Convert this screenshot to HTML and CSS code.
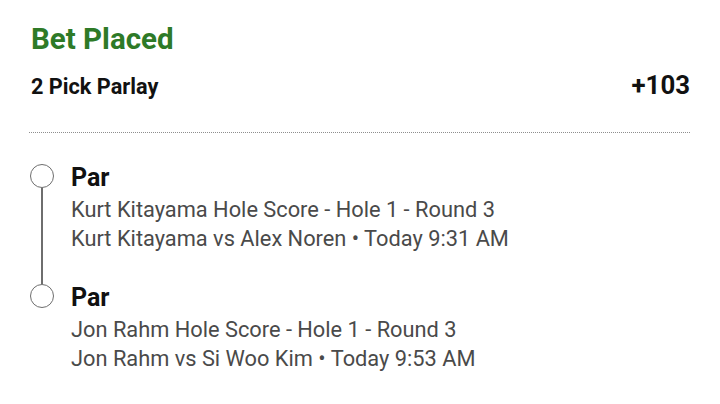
FILE: index.html
```html
<!DOCTYPE html>
<html>
<head>
<meta charset="utf-8">
<link rel="stylesheet" href="styles.css">
</head>
<body>
<div class="card">
  <div class="title">Bet Placed</div>
  <div class="head">
    <div class="parlay">2 Pick Parlay</div>
    <div class="odds">+103</div>
  </div>
  <div class="divider"></div>
  <div class="legs">
    <div class="leg">
      <div class="marker"><span class="circle"></span><span class="line"></span></div>
      <div class="info">
        <div class="pick">Par</div>
        <div class="sub">Kurt Kitayama Hole Score - Hole 1 - Round 3</div>
        <div class="sub">Kurt Kitayama vs Alex Noren • Today 9:31 AM</div>
      </div>
    </div>
    <div class="leg last">
      <div class="marker"><span class="circle"></span></div>
      <div class="info">
        <div class="pick">Par</div>
        <div class="sub">Jon Rahm Hole Score - Hole 1 - Round 3</div>
        <div class="sub">Jon Rahm vs Si Woo Kim • Today 9:53 AM</div>
      </div>
    </div>
  </div>
</div>
</body>
</html>
```
FILE: styles.css
```css
* { box-sizing: border-box; }
html, body { margin: 0; padding: 0; background: #fff; }
body { font-family: Roboto, "Noto Sans", sans-serif; color: #1a1a1a; }
.card { padding: 21px 30px 0 31px; }
.title { font-size: 29.5px; font-weight: 700; color: #2e7a27; line-height: 36px; }
.head { display: flex; justify-content: space-between; align-items: baseline; margin-top: 13.6px; }
.parlay { font-size: 21.7px; font-weight: 700; line-height: 28px; color: #111; }
.odds { font-size: 25.8px; font-weight: 700; line-height: 28px; color: #111; }
.divider { margin-top: 31px; border-top: 1.5px dotted #8e8e8e; margin-left: -2px; }
.legs { margin-top: 31px; margin-left: -1px; }
.leg { display: flex; gap: 17px; }
.marker { width: 24px; display: flex; flex-direction: column; align-items: center; flex: none; }
.circle { width: 24px; height: 24px; border: 1.6px solid #6e6e6e; border-radius: 50%; flex: none; }
.line { width: 2px; background: #6e6e6e; flex: 1; }
.leg:not(.last) .info { padding-bottom: 31px; }
.pick { font-size: 25px; font-weight: 700; color: #111; line-height: 28px; margin-bottom: 3px; }
.sub { font-size: 21.8px; color: #4a4a4a; line-height: 29px; }
```
